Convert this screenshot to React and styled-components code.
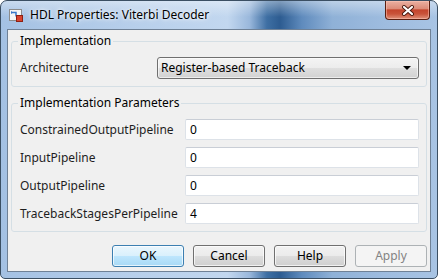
import React from "react";
import styled, { createGlobalStyle } from "styled-components";

const GlobalStyle = createGlobalStyle`
  html, body { margin: 0; padding: 0; background: #ffffff; }
  body {
    font-family: "Noto Sans", "Liberation Sans", Arial, sans-serif;
    font-size: 12px;
    color: #000;
  }
`;

const Window = styled.div`
  width: 438px;
  height: 279px;
  box-sizing: border-box;
  display: flex;
  flex-direction: column;
  border: 1px solid #3b4f63;
  border-radius: 7px 7px 5px 5px;
  padding: 0 6px 6px 6px;
  overflow: hidden;
  background:
    linear-gradient(180deg, rgba(255, 255, 255, 0.4) 0px, rgba(255, 255, 255, 0) 16px),
    linear-gradient(90deg, #a4c1e3 0%, #b7cfeb 30%, #c2d7ef 52%, #9ab8dc 57%, #3e6fa3 61%, #2d5c91 64%, #5f8bbd 69%, #8fb1d7 76%, #9ebcdf 88%, #a8c4e4 100%);
`;

const TitleBar = styled.div`
  height: 28px;
  display: flex;
  align-items: flex-start;
`;

const TitleIcon = styled.svg`
  width: 16px;
  height: 16px;
  margin: 6px 0 0 1px;
  flex: none;
`;

const TitleText = styled.div`
  margin: 6px 0 0 6px;
  line-height: 16px;
  font-size: 12px;
  color: #000;
  text-shadow: 0 0 6px rgba(255, 255, 255, 0.95), 0 0 3px rgba(255, 255, 255, 0.9);
`;

const CloseButton = styled.div`
  margin-left: auto;
  margin-right: 1px;
  width: 45px;
  height: 19px;
  box-sizing: border-box;
  border: 1px solid #5a1e10;
  border-top: none;
  border-radius: 0 0 4px 4px;
  box-shadow: inset 0 0 0 1px rgba(255, 200, 185, 0.5);
  background: linear-gradient(180deg, #eab0a2 0%, #dc8c79 42%, #c4452d 50%, #c9533a 72%, #e0917a 100%);
  display: flex;
  align-items: center;
  justify-content: center;
`;

const Client = styled.div`
  flex: 1;
  display: flex;
  flex-direction: column;
  background: #f0f0f0;
  border: 1px solid #6f8196;
  padding: 3px 3px 0 3px;
`;

const Group = styled.fieldset`
  margin: ${(p) => p.$top}px 0 0 0;
  padding: 8px 7px 7px 8px;
  border: 1px solid #d5dfe5;
  border-radius: 3px;
  min-width: 0;
  display: flex;
  flex-direction: column;
  gap: 7px;
`;

const Legend = styled.legend`
  margin-left: -2px;
  padding: 0 2px;
  line-height: 16px;
  font-size: 12px;
  color: #000;
`;

const Row = styled.div`
  display: grid;
  grid-template-columns: ${(p) => p.$label}px 1fr;
  align-items: center;
  line-height: 16px;
`;

const Label = styled.span`
  white-space: nowrap;
  color: #1e1e1e;
`;

const Select = styled.div`
  height: 22px;
  box-sizing: border-box;
  border: 1px solid #707070;
  border-radius: 3px;
  background: linear-gradient(180deg, #f4f4f4 0%, #ececec 50%, #dfdfdf 50%, #d2d2d2 100%);
  box-shadow: inset 0 0 0 1px rgba(255, 255, 255, 0.6);
  display: flex;
  align-items: center;
  justify-content: space-between;
  padding: 0 7px 0 3px;
`;

const Arrow = styled.span`
  width: 0;
  height: 0;
  border-left: 4px solid transparent;
  border-right: 4px solid transparent;
  border-top: 4px solid #000;
`;

const Field = styled.div`
  height: 21px;
  box-sizing: border-box;
  border: 1px solid #dde2e8;
  border-top-color: #c9ced6;
  border-radius: 2px;
  background: #fff;
  display: flex;
  align-items: center;
  padding: 0 4px;
`;

const Buttons = styled.div`
  display: flex;
  justify-content: flex-end;
  gap: 9px;
  margin-top: 13px;
`;

const Button = styled.div`
  width: 72px;
  height: 22px;
  box-sizing: border-box;
  border-radius: 3px;
  display: flex;
  align-items: center;
  justify-content: center;
  line-height: 16px;
  border: 1px solid ${(p) => (p.$default ? "#3c7fb1" : p.$disabled ? "#adb2b5" : "#707070")};
  color: ${(p) => (p.$disabled ? "#838383" : "#000")};
  background: ${(p) =>
    p.$default
      ? "linear-gradient(180deg, #eaf6fd 0%, #d9f0fc 50%, #bee6fd 50%, #a7d9f5 100%)"
      : p.$disabled
      ? "#f4f4f4"
      : "linear-gradient(180deg, #f2f2f2 0%, #ebebeb 50%, #dddddd 50%, #cfcfcf 100%)"};
  box-shadow: ${(p) => (p.$disabled ? "none" : "inset 0 0 0 1px rgba(255, 255, 255, 0.7)")};
`;

const params = [
  ["ConstrainedOutputPipeline", "0"],
  ["InputPipeline", "0"],
  ["OutputPipeline", "0"],
  ["TracebackStagesPerPipeline", "4"],
];

export default function App() {
  return (
    <>
      <GlobalStyle />
      <Window>
        <TitleBar>
          <TitleIcon viewBox="0 0 16 16">
            <rect x="1.5" y="2.5" width="12" height="11" fill="#f6f6f6" stroke="#8c8c8c" />
            <path d="M3 5.5h5v4" fill="none" stroke="#3a78c8" strokeWidth="1.5" />
            <path d="M3 4l2 1.5L3 7z" fill="#3a78c8" />
            <rect x="8.5" y="8.5" width="6" height="6" fill="#d9432e" stroke="#8e2012" />
          </TitleIcon>
          <TitleText>HDL Properties: Viterbi Decoder</TitleText>
          <CloseButton>
            <svg width="14" height="11" viewBox="0 0 14 11">
              <path d="M3 2l8 7M11 2l-8 7" stroke="#4a1a10" strokeWidth="4" strokeLinecap="round" />
              <path d="M3 2l8 7M11 2l-8 7" stroke="#ffffff" strokeWidth="2.2" strokeLinecap="round" />
            </svg>
          </CloseButton>
        </TitleBar>
        <Client>
          <Group $top={0}>
            <Legend>Implementation</Legend>
            <Row $label={137}>
              <Label>Architecture</Label>
              <Select>
                <span>Register-based Traceback</span>
                <Arrow />
              </Select>
            </Row>
          </Group>
          <Group $top={8}>
            <Legend>Implementation Parameters</Legend>
            {params.map(([name, value]) => (
              <Row key={name} $label={165}>
                <Label>{name}</Label>
                <Field>{value}</Field>
              </Row>
            ))}
          </Group>
          <Buttons>
            <Button $default>OK</Button>
            <Button>Cancel</Button>
            <Button>Help</Button>
            <Button $disabled>Apply</Button>
          </Buttons>
        </Client>
      </Window>
    </>
  );
}
